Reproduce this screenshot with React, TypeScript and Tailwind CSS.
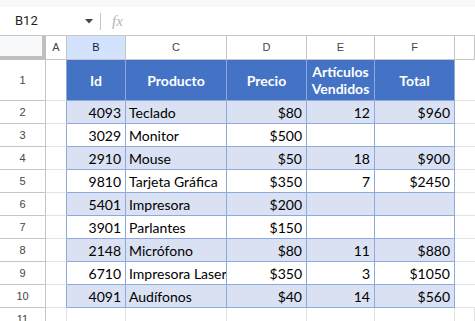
import React from "react";

type Row = {
  id: number;
  producto: string;
  precio: string;
  vendidos?: number;
  total?: string;
};

const rows: Row[] = [
  { id: 4093, producto: "Teclado", precio: "$80", vendidos: 12, total: "$960" },
  { id: 3029, producto: "Monitor", precio: "$500" },
  { id: 2910, producto: "Mouse", precio: "$50", vendidos: 18, total: "$900" },
  { id: 9810, producto: "Tarjeta Gráfica", precio: "$350", vendidos: 7, total: "$2450" },
  { id: 5401, producto: "Impresora", precio: "$200" },
  { id: 3901, producto: "Parlantes", precio: "$150" },
  { id: 2148, producto: "Micrófono", precio: "$80", vendidos: 11, total: "$880" },
  { id: 6710, producto: "Impresora Laser", precio: "$350", vendidos: 3, total: "$1050" },
  { id: 4091, producto: "Audífonos", precio: "$40", vendidos: 14, total: "$560" },
];

const cols = ["A", "B", "C", "D", "E", "F", ""];

const gridCols = "grid grid-cols-[46px_21px_59px_101px_80px_68px_80px_1fr]";

function RowHeader({ n, tall }: { n: number; tall?: boolean }) {
  return (
    <div
      className={`flex items-center justify-center border-r border-b border-[#c4c7c5] bg-white font-['Liberation_Sans',Arial,sans-serif] text-[11px] text-[#444746] ${
        tall ? "h-[41px]" : "h-[23px]"
      }`}
    >
      {n}
    </div>
  );
}

export default function App() {
  return (
    <div className="w-[475px] h-[321px] overflow-hidden bg-white font-['Liberation_Sans',Arial,sans-serif]">
      {/* top strip */}
      <div className="h-[7px] bg-[#f8f9fa]" />

      {/* formula bar */}
      <div className="flex h-[29px] items-center border-b border-[#c4c7c5] bg-white">
        <div className="flex w-[100px] items-center pl-[15px] pr-[7px]">
          <span className="flex-1 font-['Roboto',sans-serif] text-[13px] text-[#1f1f1f]">B12</span>
          <svg width="8" height="5" viewBox="0 0 8 5">
            <path d="M0 0h8L4 4.5z" fill="#444746" />
          </svg>
        </div>
        <div className="h-[17px] w-px bg-[#c4c7c5]" />
        <span className="ml-[11px] font-['Liberation_Serif',serif] text-[15px] italic text-[#b0b3b6]">
          fx
        </span>
      </div>

      {/* column headers */}
      <div className={`${gridCols} h-[24px]`}>
        <div className="border-r-[4px] border-b-[4px] border-[#c0c0c0] bg-[#f8f9fa]" />
        {cols.map((c, i) => (
          <div
            key={i}
            className={`flex items-center justify-center border-r border-b border-[#c4c7c5] text-[11px] ${
              c === "B" ? "bg-[#d3e3fd] text-[#0b1e3d]" : "bg-white text-[#444746]"
            }`}
          >
            {c}
          </div>
        ))}
      </div>

      {/* row 1: table header */}
      <div className={`${gridCols} font-['Lato',sans-serif]`}>
        <RowHeader n={1} tall />
        <div className="h-[41px] border-r border-b border-r-[#8ea9db] border-b-[#e1e3e1]" />
        {["Id", "Producto", "Precio", "Artículos Vendidos", "Total"].map((h) => (
          <div
            key={h}
            className="flex h-[41px] items-center justify-center border-r border-b border-[#8ea9db] bg-[#4472c4] px-1 text-center text-[14px] font-bold leading-[17px] text-white"
          >
            {h}
          </div>
        ))}
        <div className="h-[41px] border-b border-[#e1e3e1]" />
      </div>

      {/* data rows */}
      {rows.map((r, i) => {
        const band = i % 2 === 0 ? "bg-[#d9e1f2]" : "bg-white";
        const cell = `flex h-[23px] items-center border-r border-b border-[#8ea9db] px-[4px] whitespace-nowrap overflow-hidden text-[14px] text-black ${band}`;
        return (
          <div key={r.id} className={`${gridCols} font-['Lato',sans-serif]`}>
            <RowHeader n={i + 2} />
            <div className="h-[23px] border-r border-b border-r-[#8ea9db] border-b-[#e1e3e1]" />
            <div className={`${cell} justify-end`}>{r.id}</div>
            <div className={`${cell} pl-[3px]`}>{r.producto}</div>
            <div className={`${cell} justify-end`}>{r.precio}</div>
            <div className={`${cell} justify-end`}>{r.vendidos ?? ""}</div>
            <div className={`${cell} justify-end`}>{r.total ?? ""}</div>
            <div className="h-[23px] border-b border-[#e1e3e1]" />
          </div>
        );
      })}

      {/* row 11 */}
      <div className={gridCols}>
        <RowHeader n={11} />
        {cols.map((c, i) => (
          <div key={i} className="h-[23px] border-r border-[#e1e3e1]" />
        ))}
      </div>
    </div>
  );
}
